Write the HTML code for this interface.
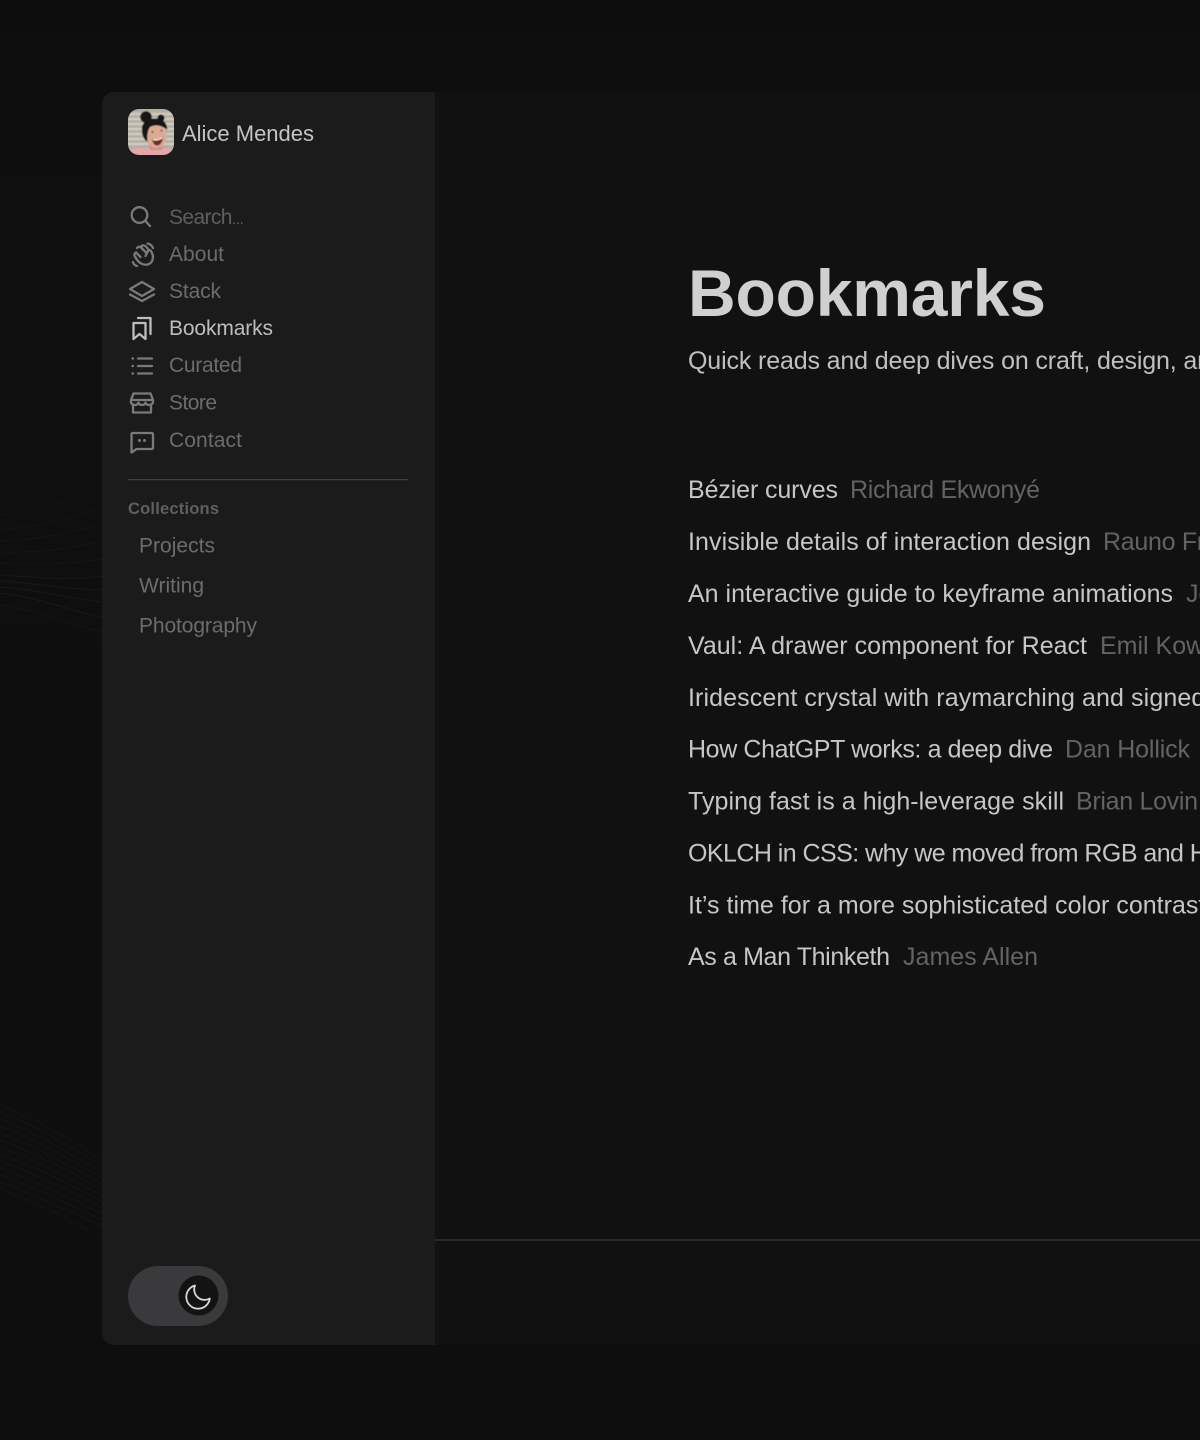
<!DOCTYPE html>
<html lang="en">
<head>
<meta charset="utf-8">
<title>Bookmarks</title>
<style>
html,body{margin:0;padding:0;background:#0e0e0e;width:1200px;height:1440px;overflow:hidden}
svg{display:block}
text{font-family:"Liberation Sans",sans-serif}
.nav{font-size:21px;fill:#6c6c6c}
.t{font-size:25px;fill:#c6c6c6}
.a{font-size:25px;fill:#636363}
.ic{fill:none;stroke:#7a7a7a;stroke-width:2.300;stroke-linecap:round;stroke-linejoin:round}
</style>
</head>
<body>
<svg width="1200" height="1440" viewBox="0 0 1200 1440" xmlns="http://www.w3.org/2000/svg">
<defs>
<linearGradient id="pg" x1="0" y1="0" x2="0" y2="1"><stop offset="0" stop-color="#0d0d0d"/><stop offset=".15" stop-color="#0f0f0f"/><stop offset="1" stop-color="#0e0e0e"/></linearGradient>
<clipPath id="av"><rect x="128" y="109" width="46" height="46" rx="11"/></clipPath>
<filter id="bl" x="-5%" y="-5%" width="110%" height="110%"><feGaussianBlur stdDeviation=".5"/></filter>
</defs>
<rect width="1200" height="1440" fill="url(#pg)"/>

<g fill="none" stroke="#161616" stroke-width="1">
<path d="M0 244C40 238 75 244 102 252" stroke="#121212"/>
<path d="M0 455C40 445 75 425 102 405" stroke="#121212"/>
<path d="M0 470C40 462 75 445 102 425" stroke="#131313"/>
<path d="M0 485C40 478 75 462 102 445" stroke="#131313"/>
<path d="M0 500C40 494 75 480 102 465" stroke="#141414"/>
<path d="M0 515C40 511 75 498 102 486" stroke="#141414"/>
<path d="M0 530C40 527 75 517 102 506"/>
<path d="M0 541C40 540 75 532 102 524"/>
<path d="M0 552C40 553 75 548 102 541"/>
<path d="M0 563C40 566 75 563 102 559"/>
<path d="M0 575C40 578 75 581 102 576" stroke="#181818"/>
<path d="M0 581C40 584 75 590 102 590" stroke="#181818"/>
<path d="M0 587C40 590 75 600 102 602" stroke="#1a1a1a"/>
<path d="M0 593C40 598 70 610 102 618" stroke="#1a1a1a"/>
<path d="M0 605C40 610 70 624 102 632" stroke="#161616"/>
</g>
<g fill="none" stroke="#151515" stroke-width="1">
<path d="M0 1105C40 1120 70 1140 102 1160"/>
<path d="M0 1112C40 1127 70 1147 102 1166"/>
<path d="M0 1119C40 1134 70 1154 102 1172"/>
<path d="M0 1126C40 1141 70 1160 102 1178"/>
<path d="M0 1133C40 1148 70 1166 102 1184"/>
<path d="M0 1140C40 1155 70 1172 102 1190"/>
<path d="M0 1147C40 1162 70 1178 102 1196"/>
<path d="M0 1154C40 1169 70 1184 102 1202"/>
<path d="M0 1161C40 1176 70 1191 102 1208"/>
<path d="M0 1168C40 1183 70 1198 102 1214"/>
<path d="M0 1175C40 1190 70 1205 102 1220"/>
<path d="M0 1182C40 1197 70 1212 102 1226"/>
<path d="M0 1189C40 1204 70 1219 102 1238"/>
</g>

<!-- main -->
<rect x="435" y="92" width="765" height="1253" fill="#111111"/>
<rect x="435" y="1239.500" width="765" height="1" fill="#3f3f3f"/>

<text x="688" y="316" font-size="66" font-weight="700" fill="#d0d0d0" textLength="358" lengthAdjust="spacing">Bookmarks</text>
<text x="688" y="369" font-size="25" fill="#c0c0c0" letter-spacing="-.14">Quick reads and deep dives on craft, design, and the web.</text>

<text class="t" x="688" y="498" textLength="150">Bézier curves</text>
<text class="a" x="850" y="498" textLength="190">Richard Ekwonyé</text>
<text class="t" x="688" y="550" textLength="403">Invisible details of interaction design</text>
<text class="a" x="1103" y="550" letter-spacing="-.3">Rauno Freiberg</text>
<text class="t" x="688" y="602" textLength="485">An interactive guide to keyframe animations</text>
<text class="a" x="1186" y="602">Josh Comeau</text>
<text class="t" x="688" y="654" textLength="399">Vaul: A drawer component for React</text>
<text class="a" x="1100" y="654">Emil Kowalski</text>
<text class="t" x="688" y="706" letter-spacing=".1">Iridescent crystal with raymarching and signed distance fields</text>
<text class="t" x="688" y="757.500" textLength="365">How ChatGPT works: a deep dive</text>
<text class="a" x="1065" y="757.500" textLength="125">Dan Hollick</text>
<text class="t" x="688" y="809.500" textLength="376">Typing fast is a high-leverage skill</text>
<text class="a" x="1076" y="809.500" textLength="122">Brian Lovin</text>
<text class="t" x="688" y="861.500" letter-spacing="-.55">OKLCH in CSS: why we moved from RGB and HSL</text>
<text class="t" x="688" y="913.500" letter-spacing=".02">It’s time for a more sophisticated color contrast check</text>
<text class="t" x="688" y="965" textLength="202">As a Man Thinketh</text>
<text class="a" x="903" y="965" textLength="135">James Allen</text>

<!-- sidebar -->
<path d="M114 92H435V1345H114a12 12 0 0 1-12-12V104a12 12 0 0 1 12-12Z" fill="#1c1b1c"/>

<!-- avatar -->
<g clip-path="url(#av)">
<g filter="url(#bl)">
<rect x="126" y="107" width="50" height="50" fill="#b4aea3"/>
<g stroke="#d2cdc2" stroke-width="2.200"><path d="M126 114H176M126 119H176M126 124H176M126 129H176M126 134H176M126 139H176M126 144H176"/></g>
<path d="M126 157V151C134 148 141 147 149 148L163 148C168 147 172 149 176 152V157Z" fill="#e4a8ab"/>
<path d="M148 142L150 150L162 150L163 144Z" fill="#cf9180"/>
<ellipse cx="156" cy="136" rx="10.500" ry="12" fill="#dcaa93" transform="rotate(-6 156 136)"/>
<circle cx="146" cy="117" r="5.800" fill="#191513"/>
<circle cx="161" cy="118" r="3.500" fill="#191513"/>
<path d="M142 131C141 123 147 118 155 118.500C162 118 168 123 167 130C162 125 155 124 150 127C147 131 147 138 147.500 142C144.500 140 142 136 142 131Z" fill="#191513"/>
<path d="M152 139C155 140 160 139 163 136.500C163 142 160 145.500 157 145.500C154 145.500 152.500 142 152 139Z" fill="#6e2c2a"/>
<path d="M153 139.500C156 140.300 159.500 139.800 162.500 137.500" stroke="#f1ece6" stroke-width="1.300" fill="none"/>
<circle cx="152.500" cy="132" r=".9" fill="#2a1c18"/>
<circle cx="161.500" cy="130.500" r=".9" fill="#2a1c18"/>
</g>
</g>

<text x="182" y="141" font-size="22" fill="#c4c4c4" textLength="132">Alice Mendes</text>

<!-- nav -->
<text class="nav" x="169" y="224" textLength="75" style="fill:#5e5e5e">Search<tspan font-size="16">...</tspan></text>
<text class="nav" x="169" y="261" textLength="55">About</text>
<text class="nav" x="169" y="298" textLength="52">Stack</text>
<text class="nav" x="169" y="335" textLength="104" style="fill:#bdbdbd">Bookmarks</text>
<text class="nav" x="169" y="372" textLength="73">Curated</text>
<text class="nav" x="169" y="409.500" textLength="48">Store</text>
<text class="nav" x="169" y="447" textLength="73">Contact</text>

<!-- icons -->
<g class="ic">
<circle cx="139.500" cy="215" r="7.800"/>
<path d="M145.500 221L150 226"/>
<!-- wave -->
<path d="M136 252.500L140.500 257M137 248C138 246.500 140 246.500 141 247.500L146 252.500M141.500 246C143 245 145 245.500 146 246.500L149 250"/>
<path d="M136 252.500C134 253.500 134 255.500 135.500 257.500C137 260 138.500 262 141 263.500C146 266 151 264.500 152.500 260C153.500 256.500 152.500 253 150.500 250.500C149 249.500 147.500 250.500 147.500 252C147 253.500 146 254.500 145.500 256"/>
<path d="M147.500 243.500C150 244 152 245.500 153 248"/>
<path d="M133 262C133.500 264 135 265.500 137 266"/>
<!-- stack -->
<path d="M142 282L154 289L142 296L130 289Z"/>
<path d="M130 294.500L142 301L154 294.500"/>
<!-- bookmarks -->
<path d="M133.500 323H145.500V339L139.500 334L133.500 339Z" style="stroke:#bdbdbd"/>
<path d="M138 318H150.500V334" style="stroke:#bdbdbd"/>
<!-- list -->
<path d="M138 358.500H152M138 366H152M138 373.500H152"/>
<path d="M132.500 358.500H133M132.500 366H133M132.500 373.500H133"/>
<!-- store -->
<path d="M133.500 393.500H150.500L153 400V402C153 404 150.500 405 149 405C147 405 146 404 145.500 402.500C145 404 144 405 142 405C140 405 139 404 138.500 402.500C138 404 137 405 135 405C133.500 405 131 404 131 402V400Z"/>
<path d="M131.500 400H152.500M133 405V412.500H151V405"/>
<!-- contact -->
<path d="M133 433H151.500C152.500 433 153 433.500 153 434.500V447.500C153 448.500 152.500 449 151.500 449H136.500L131.500 452.500V434.500C131.500 433.500 132 433 133 433Z"/>
</g>
<circle cx="139.500" cy="440.500" r="1.500" fill="#7a7a7a"/>
<circle cx="144.500" cy="440.500" r="1.500" fill="#7a7a7a"/>

<rect x="128" y="479" width="280" height="1.200" fill="#3e3e3e"/>
<text x="128" y="514" font-size="16.500" font-weight="700" fill="#5f5f5f" textLength="91">Collections</text>
<text class="nav" x="139" y="552.500" textLength="76">Projects</text>
<text class="nav" x="139" y="592.500" textLength="65">Writing</text>
<text class="nav" x="139" y="632.500" textLength="118">Photography</text>

<!-- toggle -->
<rect x="128" y="1266" width="100" height="60" rx="30" fill="#3a393b"/>
<circle cx="198.500" cy="1295.500" r="20" fill="#131313"/>
<path d="M195 1285.500A11.800 11.800 0 1 0 209.800 1298.500A10.400 10.400 0 0 1 195 1285.500Z" fill="none" stroke="#d8d8d8" stroke-width="1.800" stroke-linejoin="round"/>
</svg>
</body>
</html>
